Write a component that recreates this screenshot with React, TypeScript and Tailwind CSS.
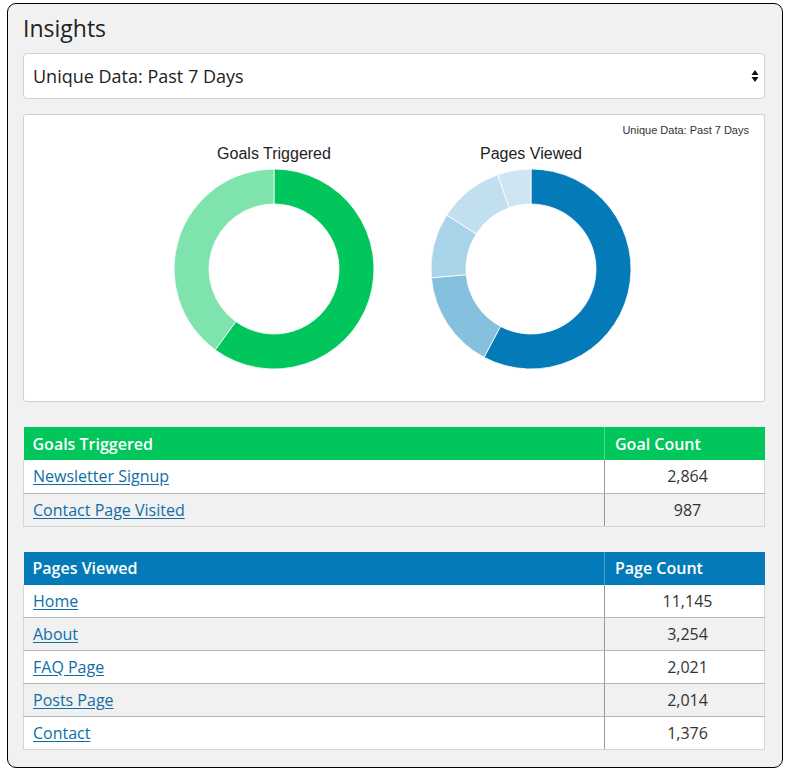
import React from "react";

type Slice = { value: number; color: string };

const goals = [
  { label: "Newsletter Signup", count: 2864 },
  { label: "Contact Page Visited", count: 987 },
];

const pages = [
  { label: "Home", count: 11145 },
  { label: "About", count: 3254 },
  { label: "FAQ Page", count: 2021 },
  { label: "Posts Page", count: 2014 },
  { label: "Contact", count: 1376 },
];

// slice sizes as drawn by the chart (degrees)
const goalSlices: Slice[] = [
  { value: 216, color: "#00c65b" },
  { value: 144, color: "#7ee3ad" },
];

const pageSlices: Slice[] = [
  { value: 208, color: "#047bb8" },
  { value: 57, color: "#85c0de" },
  { value: 37.6, color: "#a9d3e8" },
  { value: 37.9, color: "#c1dfee" },
  { value: 19.5, color: "#cfe6f2" },
];

function arcPath(cx: number, cy: number, r: number, ir: number, a0: number, a1: number) {
  const p = (rad: number, a: number) => [cx + rad * Math.sin(a), cy - rad * Math.cos(a)];
  const large = a1 - a0 > Math.PI ? 1 : 0;
  const [x0, y0] = p(r, a0);
  const [x1, y1] = p(r, a1);
  const [x2, y2] = p(ir, a1);
  const [x3, y3] = p(ir, a0);
  return `M${x0} ${y0} A${r} ${r} 0 ${large} 1 ${x1} ${y1} L${x2} ${y2} A${ir} ${ir} 0 ${large} 0 ${x3} ${y3} Z`;
}

function Donut({ slices }: { slices: Slice[] }) {
  const total = slices.reduce((s, x) => s + x.value, 0);
  let start = 0;
  return (
    <svg width="202" height="202" viewBox="0 0 202 202">
      {slices.map((s, i) => {
        const end = start + (s.value / total) * Math.PI * 2;
        const d = arcPath(101, 101, 100, 65, start, end);
        start = end;
        return <path key={i} d={d} fill={s.color} stroke="#ffffff" strokeWidth="0.8" />;
      })}
    </svg>
  );
}

function Chart({ title, slices }: { title: string; slices: Slice[] }) {
  return (
    <div className="flex flex-col items-center">
      <div className="text-[16px] leading-[19px] text-[#222] font-['Liberation_Sans',Arial,sans-serif]">{title}</div>
      <div className="mt-[5px]">
        <Donut slices={slices} />
      </div>
    </div>
  );
}

function DataTable({
  title,
  countLabel,
  color,
  rows,
}: {
  title: string;
  countLabel: string;
  color: string;
  rows: { label: string; count: number }[];
}) {
  return (
    <table className="w-full border-collapse text-[16px]">
      <thead>
        <tr className="text-white" style={{ backgroundColor: color }}>
          <th className="h-[33px] text-left pl-[9px] font-semibold">{title}</th>
          <th className="h-[33px] w-[160px] text-left pl-[10px] font-semibold border-l border-white/30">{countLabel}</th>
        </tr>
      </thead>
      <tbody>
        {rows.map((r, i) => (
          <tr key={r.label} className={i % 2 === 0 ? "bg-white" : "bg-[#f1f1f1]"}>
            <td
              className={`h-[33px] pl-[9px] border-l border-l-[#d6d6d6] ${
                i === rows.length - 1 ? "border-b border-b-[#d6d6d6]" : "border-b border-b-[#b5b5b5]"
              }`}
            >
              <a href="#" className="text-[#0f6ea6] underline underline-offset-2">
                {r.label}
              </a>
            </td>
            <td
              className={`h-[33px] text-center pl-[6px] text-[#333] border-l border-l-[#999] border-r border-r-[#d6d6d6] ${
                i === rows.length - 1 ? "border-b border-b-[#d6d6d6]" : "border-b border-b-[#b5b5b5]"
              }`}
            >
              {r.count.toLocaleString("en-US")}
            </td>
          </tr>
        ))}
      </tbody>
    </table>
  );
}

export default function App() {
  return (
    <div className="w-[790px] h-[775px] bg-white pt-[3px] pl-[7px] font-['Open_Sans',sans-serif] text-[#222]">
      <div className="w-[776px] h-[765px] bg-[#f1f1f1] border border-black rounded-[9px] pt-[10px] pl-[15px] pr-[17px]">
        <h1 className="text-[23px] leading-[29px] text-[#222]">Insights</h1>
        <div className="mt-[10px] h-[46px] bg-white border border-[#d0d0d0] rounded-[4px] flex items-center justify-between pl-[9px] pr-[5px]">
          <span className="text-[18px]">Unique Data: Past 7 Days</span>
          <svg width="8" height="14" viewBox="0 0 8 14">
            <path d="M4 1 L7.5 6 L0.5 6 Z" fill="#111" />
            <path d="M4 13 L7.5 8 L0.5 8 Z" fill="#111" />
          </svg>
        </div>
        <div className="mt-[15px] h-[288px] bg-white border border-[#d0d0d0] rounded-[3px] pt-[8px] pr-[15px]">
          <div className="flex justify-end text-[11px] leading-[14px] text-[#333] font-['Liberation_Sans',Arial,sans-serif]">
            Unique Data: Past 7 Days
          </div>
          <div className="flex justify-center gap-[55px] pl-[32px] mt-[7px]">
            <Chart title="Goals Triggered" slices={goalSlices} />
            <Chart title="Pages Viewed" slices={pageSlices} />
          </div>
        </div>
        <div className="mt-[25px]">
          <DataTable title="Goals Triggered" countLabel="Goal Count" color="#00c65b" rows={goals} />
        </div>
        <div className="mt-[25px]">
          <DataTable title="Pages Viewed" countLabel="Page Count" color="#047bb8" rows={pages} />
        </div>
      </div>
    </div>
  );
}
